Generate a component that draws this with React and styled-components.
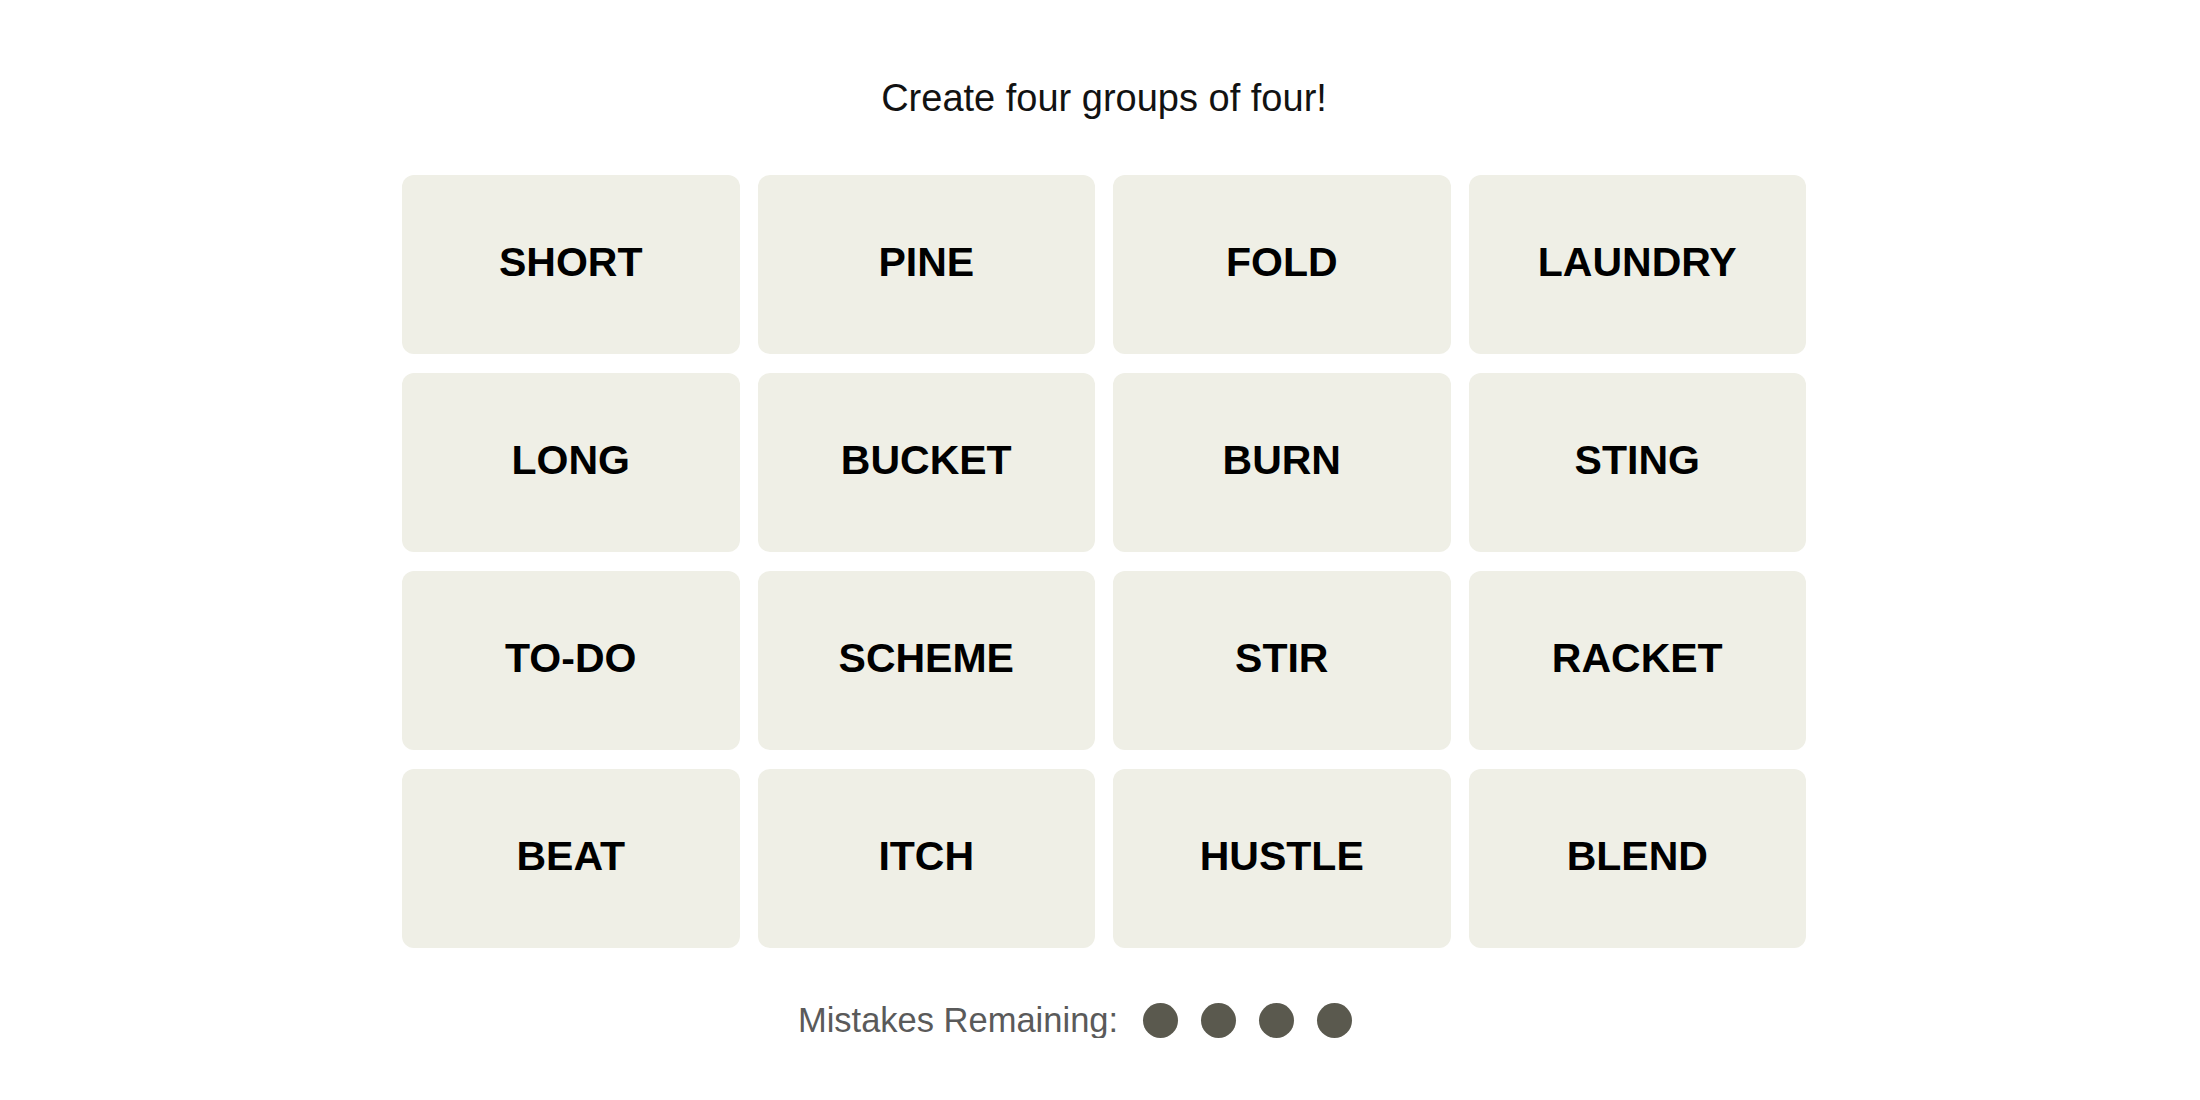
import React from "react";
import styled, { createGlobalStyle } from "styled-components";

const words = [
  "SHORT", "PINE", "FOLD", "LAUNDRY",
  "LONG", "BUCKET", "BURN", "STING",
  "TO-DO", "SCHEME", "STIR", "RACKET",
  "BEAT", "ITCH", "HUSTLE", "BLEND",
];

const GlobalStyle = createGlobalStyle`
  body {
    margin: 0;
    background: #ffffff;
    font-family: "Liberation Sans", Arial, sans-serif;
  }
`;

const Page = styled.main`
  display: flex;
  flex-direction: column;
  align-items: center;
  padding-left: 8px;
  padding-top: 76px;
`;

const Title = styled.h2`
  margin: 0 0 55px 0;
  font-size: 38px;
  line-height: 44px;
  font-weight: 400;
  color: #121212;
`;

const Board = styled.div`
  display: grid;
  grid-template-columns: repeat(4, 337.5px);
  grid-auto-rows: 179px;
  column-gap: 18px;
  row-gap: 19px;
`;

const Tile = styled.button`
  display: flex;
  align-items: center;
  justify-content: center;
  padding: 0 0 4px 0;
  border: none;
  border-radius: 12px;
  background: ${(p) => (p.$selected ? "#5a594e" : "#efefe6")};
  color: ${(p) => (p.$selected ? "#ffffff" : "#000000")};
  font-family: "Liberation Sans", Arial, sans-serif;
  font-size: 41px;
  font-weight: 700;
  text-transform: uppercase;
  cursor: pointer;
`;

const Mistakes = styled.div`
  display: flex;
  align-items: center;
  height: 35px;
  margin-top: 55px;
  margin-right: 58px;
`;

const MistakesLabel = styled.span`
  font-size: 34.5px;
  line-height: 35px;
  color: #5a5a5a;
  margin-right: 25px;
`;

const Dots = styled.div`
  display: flex;
  gap: 23px;
`;

const Dot = styled.span`
  width: 35px;
  height: 35px;
  border-radius: 50%;
  background: #5a594e;
`;

export default function App() {
  return (
    <>
      <GlobalStyle />
      <Page>
        <Title>Create four groups of four!</Title>
        <Board>
          {words.map((w) => (
            <Tile key={w}>{w}</Tile>
          ))}
        </Board>
        <Mistakes>
          <MistakesLabel>Mistakes Remaining:</MistakesLabel>
          <Dots>
            {[0, 1, 2, 3].map((i) => (
              <Dot key={i} />
            ))}
          </Dots>
        </Mistakes>
      </Page>
    </>
  );
}
